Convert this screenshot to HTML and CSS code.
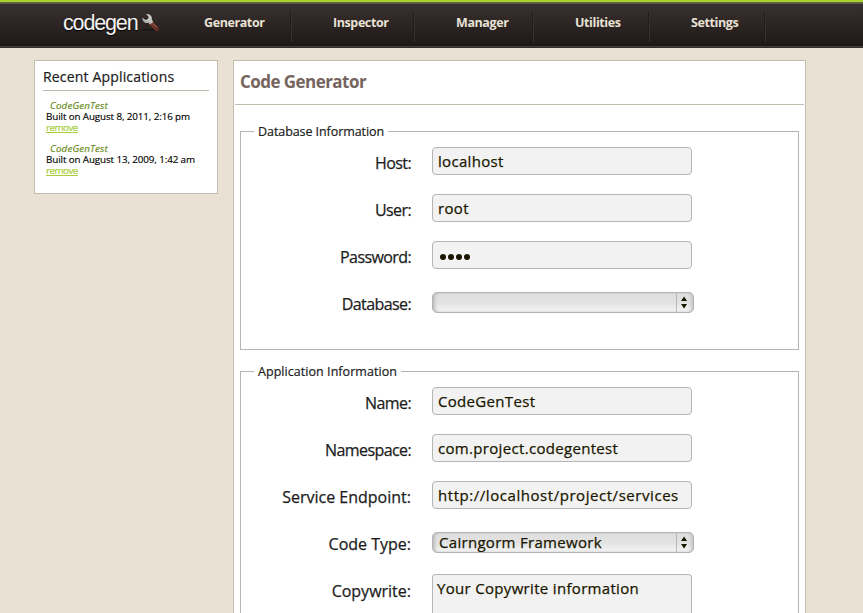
FILE: index.html
```html
<!DOCTYPE html>
<html lang="en">
<head>
<meta charset="utf-8">
<title>Code Generator</title>
<link rel="stylesheet" href="styles.css">
</head>
<body>
<header class="topbar">
  <div class="logo">
    <span class="logo-text">codegen</span>
    <svg class="wrench" width="20" height="20" viewBox="0 0 20 20">
      <ellipse cx="8" cy="16.8" rx="7" ry="1" fill="#1b1616"/>
      <path d="M10 10 L15.6 15.6" stroke="#6d3427" stroke-width="4.4" stroke-linecap="round"/>
      <path d="M10.5 9.2 L15.8 14.4" stroke="#8b5140" stroke-width="1.2" stroke-linecap="round"/>
      <path d="M5.2 1.2 C8.5 .6 11.7 3.4 10.8 6.8 L12.2 8.6 L9.3 11.5 L7.4 9.8 C4.3 10.7 1.2 8.3 1.5 4.7 L4.6 6.9 L7.2 6 L7.5 3.4 Z" fill="#c9c8c8"/>
      <path d="M2.2 6.5 C3.2 8.6 5.4 9.5 7.6 8.7 L9.3 10.4" stroke="#929090" fill="none"/>
      <circle cx="15.6" cy="15.4" r=".7" fill="#2b1c18"/>
    </svg>
  </div>
  <nav class="nav">
    <a class="nav-item generator">Generator</a>
    <a class="nav-item inspector">Inspector</a>
    <a class="nav-item manager">Manager</a>
    <a class="nav-item utilities">Utilities</a>
    <a class="nav-item settings">Settings</a>
  </nav>
</header>
<div class="page">
  <aside class="recent">
    <h2 class="recent-title">Recent Applications</h2>
    <div class="app">
      <em class="app-name">CodeGenTest</em>
      <span class="built">Built on August 8, 2011, 2:16 pm</span>
      <a class="remove">remove</a>
    </div>
    <div class="app">
      <em class="app-name">CodeGenTest</em>
      <span class="built">Built on August 13, 2009, 1:42 am</span>
      <a class="remove">remove</a>
    </div>
  </aside>
  <main class="panel">
    <h1 class="title">Code Generator</h1>
    <section class="group database">
      <h3 class="legend"><span class="legend-text">Database Information</span></h3>
      <div class="row"><label class="label tight">Host:</label><div class="field">localhost</div></div>
      <div class="row"><label class="label tight">User:</label><div class="field">root</div></div>
      <div class="row"><label class="label tight">Password:</label><div class="field dots"><i class="dot"></i><i class="dot"></i><i class="dot"></i><i class="dot"></i></div></div>
      <div class="row"><label class="label tight">Database:</label><div class="select"><span class="value"></span><svg class="arrows" width="17" height="19" viewBox="0 0 17 19"><path d="M4.3 8 L7.5 3 L10.7 8 Z M4.3 11 L7.5 16 L10.7 11 Z"/></svg></div></div>
    </section>
    <section class="group application">
      <h3 class="legend"><span class="legend-text">Application Information</span></h3>
      <div class="row"><label class="label tight">Name:</label><div class="field">CodeGenTest</div></div>
      <div class="row"><label class="label tight">Namespace:</label><div class="field">com.project.codegentest</div></div>
      <div class="row"><label class="label">Service Endpoint:</label><div class="field url">http://localhost/project/services</div></div>
      <div class="row"><label class="label">Code Type:</label><div class="select"><span class="value">Cairngorm Framework</span><svg class="arrows" width="17" height="19" viewBox="0 0 17 19"><path d="M4.3 8 L7.5 3 L10.7 8 Z M4.3 11 L7.5 16 L10.7 11 Z"/></svg></div></div>
      <div class="row last"><label class="label">Copywrite:</label><div class="field area">Your Copywrite information</div></div>
    </section>
  </main>
</div>
</body>
</html>
```
FILE: styles.css
```css
* { box-sizing: border-box; }
html, body { margin: 0; height: 613px; overflow: hidden; }
body { background: #e8e1d4; color: #1c1c1c; font-family: "Open Sans", "Noto Sans", sans-serif; }
.topbar {
  display: flex; height: 48px;
  background: linear-gradient(#aad02f 0 2px, #5f6b2c 2px 3px, #5b5652 3px 4px, #39312f 4px, #1e1818 46px, #433b3a 46px 47px, #352f2e 47px);
}
.logo { display: flex; width: 163px; padding-left: 63px; }
.logo-text { width: 78px; padding-top: 10px; font: 21.5px/26px "Liberation Sans", sans-serif; letter-spacing: -1.15px; color: #f5f3f1; text-shadow: 0 1px 1px #000; }
.wrench { flex: none; margin-top: 13px; }
.nav { display: flex; padding-top: 12px; }
.nav-item { height: 30px; padding-left: 41px; border-right: 1px solid #373130; box-shadow: inset -1px 0 #221d1c; font-size: 12.5px; line-height: 21px; font-weight: 700; color: #e8e1d4; letter-spacing: -0.4px; }
.generator { width: 129px; }
.inspector { width: 123px; }
.manager { width: 119px; }
.utilities { width: 116px; }
.settings { width: 116px; }
.page { display: flex; align-items: flex-start; gap: 15px; padding: 12px 0 0 34px; }
.recent { width: 184px; height: 134px; padding: 0 8px; background: #fff; border: 1px solid #c1beaf; }
.recent-title { margin: 0 0 9px; height: 30px; border-bottom: 1px solid #b9b8a9; font-size: 14px; line-height: 31px; font-weight: 400; letter-spacing: 0.17px; white-space: nowrap; -webkit-text-stroke: 0.2px; }
.app { display: flex; flex-direction: column; align-items: flex-start; margin: 0 0 10px 3px; font-size: 9.8px; line-height: 11px; white-space: nowrap; }
.app-name { margin-left: 4px; color: #6b8e23; letter-spacing: 0.15px; -webkit-text-stroke: 0.2px; }
.built { color: #000; letter-spacing: -0.1px; -webkit-text-stroke: 0.15px; }
.remove { color: #a6ce39; letter-spacing: -0.5px; text-decoration: underline; -webkit-text-stroke: 0.2px; }
.panel { width: 573px; height: 553px; padding: 0 1px; overflow: hidden; background: #fff; border: 1px solid #c1beaf; border-bottom: 0; }
.title { margin: 0; height: 44px; padding-left: 5px; border-bottom: 1px solid #c1beaf; font-size: 17px; line-height: 42px; font-weight: 700; letter-spacing: -0.55px; color: #75655e; }
.group { width: 559px; margin-left: 5px; border: 1px solid #b5b5b5; }
.database { height: 219px; margin-top: 26px; }
.application { height: 242px; margin-top: 21px; border-bottom: 0; }
.legend { margin: -8px 0 7px 13px; height: 16px; font-size: 12.5px; line-height: 16px; font-weight: 400; -webkit-text-stroke: 0.2px; }
.legend-text { display: inline-block; padding: 0 4px; background: #fff; }
.database .legend { letter-spacing: -0.07px; }
.application .legend { letter-spacing: 0.05px; }
.row { display: flex; height: 47px; }
.last { height: 39px; }
.label { width: 170px; margin-right: 21px; text-align: right; font-size: 16px; line-height: 32px; white-space: nowrap; -webkit-text-stroke: 0.25px; }
.tight { letter-spacing: -0.6px; }
.field { width: 260px; height: 28px; padding-left: 5px; border: 1px solid #b5b5b5; border-radius: 4px; background: #f2f2f2; color: #1a1700; font-size: 15px; line-height: 27px; letter-spacing: 0.32px; white-space: nowrap; -webkit-text-stroke: 0.25px; }
.url { letter-spacing: 0.55px; }
.dots { display: flex; align-items: center; gap: 2.3px; padding: 3px 0 0 6.5px; }
.dot { width: 6px; height: 6px; border-radius: 50%; background: #1a1700; }
.area { height: 39px; padding-left: 4px; border-bottom: 0; border-radius: 4px 4px 0 0; }
.last .area { margin-top: -1px; height: 40px; }
.select { display: flex; justify-content: space-between; width: 262px; height: 21px; margin-top: 4px; padding-left: 6px; overflow: hidden; border: 1px solid #b3b3b3; border-radius: 5px; background: linear-gradient(#dedede, #e2e2e2 50%, #f4f4f4); box-shadow: inset 3px 0 3px -1px #bebebe, inset -3px 0 3px -1px #c6c6c6; color: #1a1700; font-size: 15px; line-height: 19px; letter-spacing: 0.3px; -webkit-text-stroke: 0.25px; }
.arrows { border-left: 1px solid #b8b8b8; fill: #1a1700; }
```
